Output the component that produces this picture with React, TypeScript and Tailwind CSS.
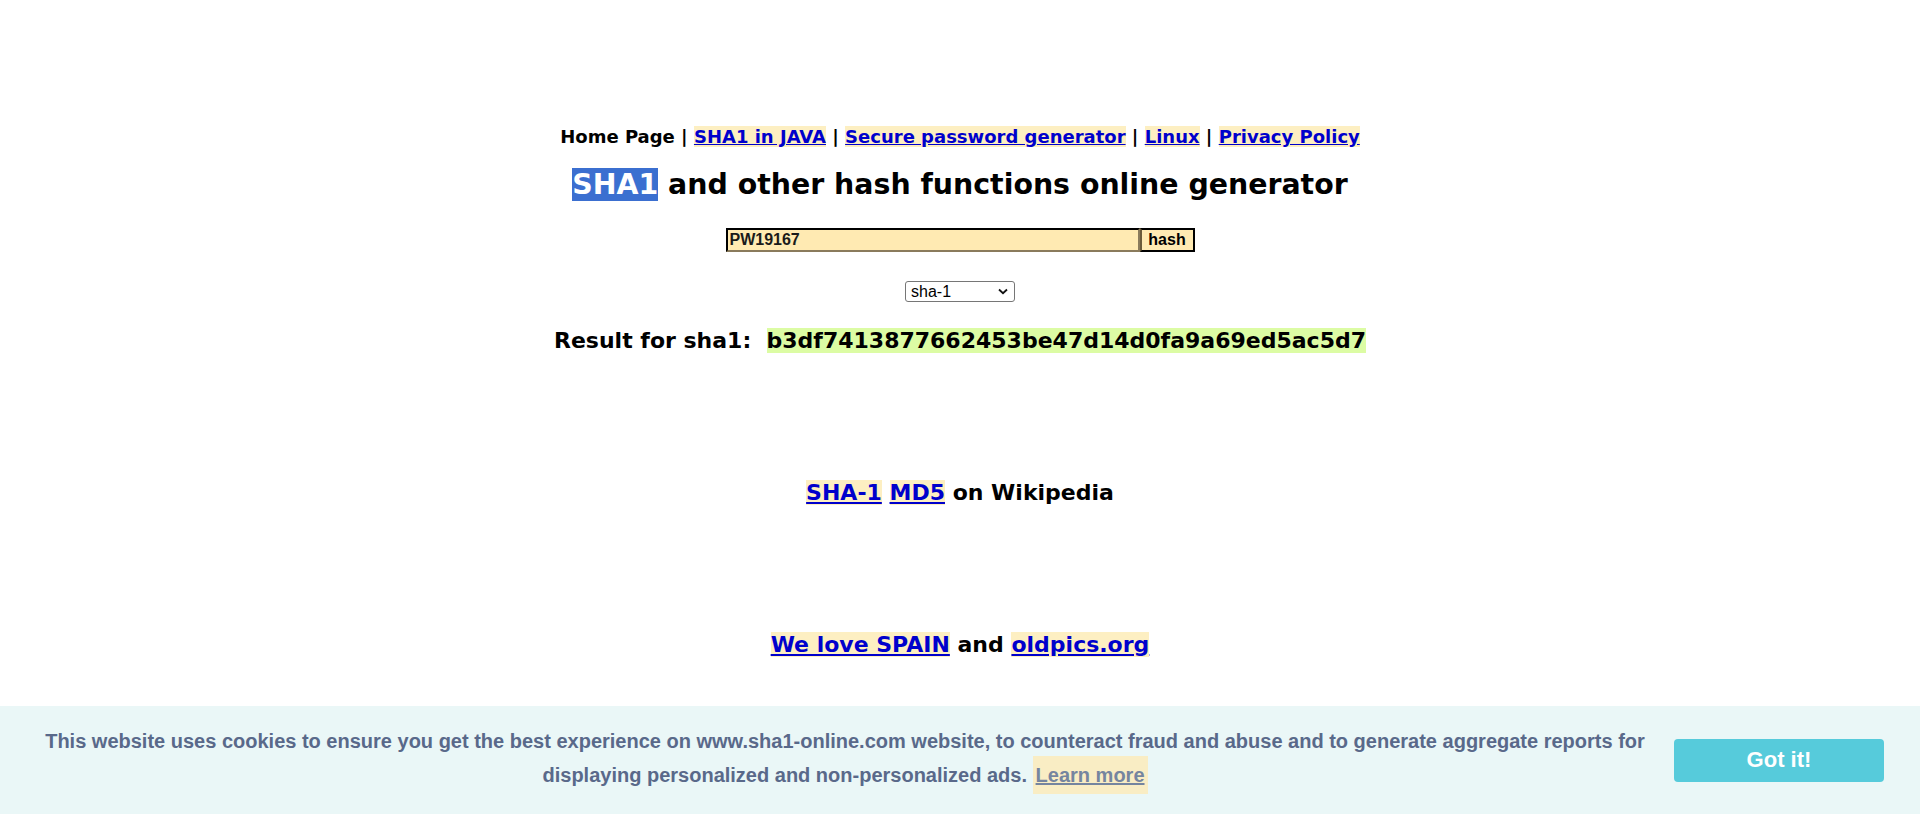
import React, { useState } from 'react'

const link = 'text-[#0000cc] underline bg-[#fdefc2]'

export default function App() {
  const [text, setText] = useState('PW19167')
  const [showCookie, setShowCookie] = useState(true)

  return (
    <div className="min-h-[814px] bg-white font-['DejaVu_Sans',Verdana,sans-serif] font-bold text-black">
      <div className="flex flex-col items-center pt-[126px]">
        {/* top menu */}
        <div className="text-[18px] leading-[21px] whitespace-nowrap">
          Home Page | <a href="#" className={link}>SHA1 in JAVA</a> | <a href="#" className={link}>Secure password generator</a> | <a href="#" className={link}>Linux</a> | <a href="#" className={link}>Privacy Policy</a>
        </div>

        <h1 className="mt-[20px] text-[28.4px] leading-[35px] whitespace-nowrap">
          <span className="bg-[#3b6fd0] text-white">SHA1</span> and other hash functions online generator
        </h1>

        <form className="mt-[26px] flex h-[24px] w-[469px]" onSubmit={(e) => e.preventDefault()}>
          <input
            value={text}
            onChange={(e) => setText(e.target.value)}
            className="h-[24px] w-[414px] border-2 border-t-black border-l-black border-b-[#8a7b5c] border-r-[#8a7b5c] bg-[#ffeab2] px-[2px] font-['Liberation_Sans',Arial,sans-serif] text-[16px] font-bold text-[#1a1a1a] outline-none"
          />
          <button className="h-[24px] w-[55px] border-2 border-l-[#6b5b3b] border-t-black border-r-black border-b-black bg-[#ffeab2] font-['Liberation_Sans',Arial,sans-serif] text-[16px] font-bold leading-none text-black">
            hash
          </button>
        </form>

        <div className="mt-[29px] flex h-[21px] w-[110px] items-center justify-between rounded-[3px] border border-[#767676] bg-white pl-[5px] pr-[6px] font-['Liberation_Sans',Arial,sans-serif] text-[16px] leading-[19px] font-normal text-black">
          <span>sha-1</span>
          <svg width="10" height="7" viewBox="0 0 10 7" fill="none">
            <path d="M1 1.5 L5 5.2 L9 1.5" stroke="#111" strokeWidth="1.8" />
          </svg>
        </div>

        <div className="mt-[26px] text-[22px] leading-[26px] whitespace-nowrap">
          Result for sha1:&nbsp; <span className="bg-[#dcfca4]">b3df7413877662453be47d14d0fa9a69ed5ac5d7</span>
        </div>

        <div className="mt-[126px] text-[22px] leading-[26px] whitespace-nowrap">
          <a href="#" className={link}>SHA-1</a> <a href="#" className={link}>MD5</a> on Wikipedia
        </div>

        <div className="mt-[126px] text-[22px] leading-[26px] whitespace-nowrap">
          <a href="#" className={link}>We love SPAIN</a> and <a href="#" className={link}>oldpics.org</a>
        </div>
      </div>

      {showCookie && (
        <div className="fixed bottom-0 left-0 right-0 flex h-[108px] items-center bg-[#eaf7f7] px-[36px] py-[20px] font-['Liberation_Sans',Helvetica,Arial,sans-serif] text-[20px] leading-[30px] text-[#59698a]">
          <div className="flex-1 pr-[20px] text-center font-bold">
            This website uses cookies to ensure you get the best experience on www.sha1-online.com website, to counteract fraud and abuse and to generate aggregate reports for displaying personalized and non-personalized ads.{' '}
            <a href="#" className="inline-block bg-[#fdebb8] px-[3px] py-[4px] underline opacity-80">Learn more</a>
          </div>
          <button
            onClick={() => setShowCookie(false)}
            className="h-[43px] w-[210px] shrink-0 rounded-[4px] bg-[#56cbdb] text-[22px] font-bold text-white"
          >
            Got it!
          </button>
        </div>
      )}
    </div>
  )
}
